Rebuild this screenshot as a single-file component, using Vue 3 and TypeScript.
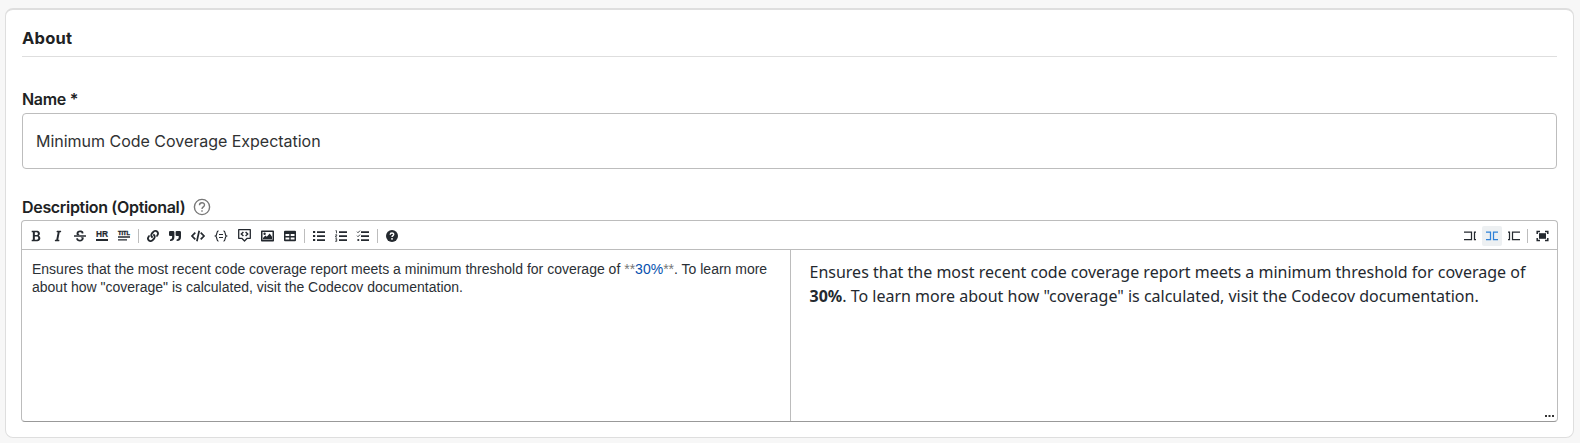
<script setup lang="ts">
import { ref } from 'vue'

interface Tool {
  name: string
  box: string
  size?: string
  body: string
}

const bold = '<path d="M304.793 243.891c33.639-18.537 53.657-54.16 53.657-95.693 0-48.236-26.25-87.626-68.626-104.179C265.138 34.01 240.849 32 209.661 32H24c-8.837 0-16 7.163-16 16v33.049c0 8.837 7.163 16 16 16h33.113v318.53H24c-8.837 0-16 7.163-16 16V464c0 8.837 7.163 16 16 16h195.69c24.203 0 44.834-1.289 66.866-7.584C337.52 457.193 376 410.647 376 350.014c0-52.168-26.573-91.684-71.207-106.123zM142.217 100.809h67.444c16.294 0 27.536 2.019 37.525 6.717 15.828 8.479 24.906 26.502 24.906 49.446 0 35.029-20.32 56.79-53.029 56.79h-76.846V100.809zm112.642 305.475c-10.14 4.056-22.677 4.907-31.409 4.907h-81.233V281.943h84.367c39.645 0 63.057 25.38 63.057 63.057.001 28.425-13.66 52.483-34.782 61.284z"/>'
const italic = '<path d="M204.758 416h-33.849l62.092-320h40.725a16 16 0 0 0 15.704-12.937l6.242-32C297.599 41.184 290.034 32 279.968 32H120.235a16 16 0 0 0-15.704 12.937l-6.242 32C96.362 86.816 103.927 96 113.993 96h33.846l-62.09 320H46.278a16 16 0 0 0-15.704 12.935l-6.245 32C22.402 470.815 29.967 480 40.034 480h158.479a16 16 0 0 0 15.704-12.935l6.245-32c1.927-9.88-5.638-19.065-15.704-19.065z"/>'
const strike = '<path d="M496 288H16c-8.837 0-16-7.163-16-16v-32c0-8.837 7.163-16 16-16h480c8.837 0 16 7.163 16 16v32c0 8.837-7.163 16-16 16zm-214.666 16c27.258 12.937 46.524 28.683 46.524 56.243 0 33.108-28.977 53.676-75.621 53.676-32.325 0-76.874-12.08-76.874-44.271V368c0-8.837-7.164-16-16-16H113.75c-8.836 0-16 7.163-16 16v19.204c0 66.845 77.717 101.82 154.487 101.82 88.578 0 162.013-45.438 162.013-134.424 0-19.815-3.618-36.417-10.143-50.6H281.334zm-30.952-96c-32.422-13.505-56.836-28.946-56.836-59.683 0-33.92 30.901-47.406 64.962-47.406 42.647 0 64.962 16.593 64.962 32.985V136c0 8.837 7.164 16 16 16h45.613c8.836 0 16-7.163 16-16v-30.318c0-52.438-71.725-79.875-142.575-79.875-85.203 0-150.726 40.972-150.726 125.646 0 22.71 4.665 41.176 12.777 56.547h129.823z"/>'
const chain = '<path d="M326.612 185.391c59.747 59.809 58.927 155.698.36 214.59-.11.12-.24.25-.36.37l-67.2 67.2c-59.27 59.27-155.699 59.262-214.96 0-59.27-59.26-59.27-155.7 0-214.96l37.106-37.106c9.84-9.84 26.786-3.3 27.294 10.606.648 17.722 3.826 35.527 9.69 52.721 1.986 5.822.567 12.262-3.783 16.612l-13.087 13.087c-28.026 28.026-28.905 73.66-1.155 101.96 28.024 28.579 74.086 28.749 102.325.51l67.2-67.19c28.191-28.191 28.073-73.757 0-101.83-3.701-3.694-7.429-6.564-10.341-8.569a16.037 16.037 0 0 1-6.947-12.606c-.396-10.567 3.348-21.456 11.698-29.806l21.054-21.055c5.521-5.521 14.182-6.199 20.584-1.731a152.482 152.482 0 0 1 20.522 17.197zM467.547 44.449c-59.261-59.262-155.69-59.27-214.96 0l-67.2 67.2c-.12.12-.25.25-.36.37-58.566 58.892-59.387 154.781.36 214.59a152.454 152.454 0 0 0 20.521 17.196c6.402 4.468 15.064 3.789 20.584-1.731l21.054-21.055c8.35-8.35 12.094-19.239 11.698-29.806a16.037 16.037 0 0 0-6.947-12.606c-2.912-2.005-6.64-4.875-10.341-8.569-28.073-28.073-28.191-73.639 0-101.83l67.2-67.19c28.239-28.239 74.3-28.069 102.325.51 27.75 28.3 26.872 73.934-1.155 101.96l-13.087 13.087c-4.35 4.35-5.769 10.79-3.783 16.612 5.864 17.194 9.042 34.999 9.69 52.721.509 13.906 17.454 20.446 27.294 10.606l37.106-37.106c59.271-59.259 59.271-155.699.001-214.959z"/>'
const lines = '<path d="M4 1.2h8v1.7H4zM4 5.2h8v1.7H4zM4 9.2h8v1.7H4z"/>'

const groups: Tool[][] = [
  [
    { name: 'Bold', box: '0 0 384 512', body: bold },
    { name: 'Italic', box: '0 0 320 512', body: italic },
    { name: 'Strikethrough', box: '0 0 512 512', body: strike },
    { name: 'Rule', box: '0 0 12 12', body: '<text x="0" y="7.2" font-size="9.500" font-weight="700" stroke="currentColor" stroke-width=".2" textLength="12" lengthAdjust="spacingAndGlyphs">HR</text><path d="M0 9h12v2H0z"/>' },
    { name: 'Title', box: '0 0 12 12', body: '<text x="0" y="5" font-size="6" font-weight="700" stroke="currentColor" stroke-width=".4" textLength="12" lengthAdjust="spacingAndGlyphs">TITL</text><path d="M0 6.2h12v1.5H0zM0 9.2h9v1.4H0z"/>' },
  ],
  [
    { name: 'Link', box: '0 0 512 512', body: chain },
    { name: 'Quote', box: '0 0 12 12', body: '<path d="M1.100 1h3A1.300 1.300 0 0 1 5.400 2.300V7a4 4 0 0 1-4 4H1V9.400h.3A2 2 0 0 0 3.100 7.300V6h-2A1.100 1.100 0 0 1 0 4.900V2.100A1.100 1.100 0 0 1 1.100 1zM7.700 1h3A1.300 1.300 0 0 1 12 2.300V7a4 4 0 0 1-4 4h-.4V9.400h.3A2 2 0 0 0 9.700 7.300V6h-2a1.100 1.100 0 0 1-1.100-1.100V2.100A1.100 1.100 0 0 1 7.700 1z"/>' },
    { name: 'Code', box: '0 0 14 12', size: 'wide', body: '<path d="M4.300 2.700 1 6l3.300 3.300M9.700 2.700 13 6 9.700 9.300M8.200.8 5.900 11.200" fill="none" stroke="currentColor" stroke-width="1.700"/>' },
    { name: 'Code block', box: '0 0 13 12', size: 'wide', body: '<path d="M4 .8C1.500.8 3.100 5.200 1 6c2.100.8.5 5.200 3 5.200M9 .8c2.500 0 .9 4.400 3 5.200-2.100.8-.5 5.200-3 5.200M4.500 4.500h4M4.500 7.500h4" fill="none" stroke="currentColor" stroke-width="1.150"/>' },
    { name: 'Comment', box: '0 0 13 13', size: 'comment', body: '<path d="M.7.7h11.600v8.600H9.200L6.500 12 3.800 9.300H.7z" fill="none" stroke="currentColor" stroke-width="1.300" stroke-linejoin="round"/><path d="M5.400 2.900 3.300 5l2.100 2.100M7.600 2.900 9.700 5 7.600 7.100" fill="none" stroke="currentColor" stroke-width="1.400"/>' },
    { name: 'Image', box: '0 0 13 12', size: 'image', body: '<path fill-rule="evenodd" d="M.8.5h11.400q.8 0 .8.8v9.400q0 .8-.8.8H.8q-.8 0-.8-.8V1.300Q0 .5.800.5zM1.500 2v7.800h10V2zM2 9.300V8l2.300-2.500 1.500 1.200L8.700 3.500 11 6.700v2.600zM2.400 3.700a1.200 1.200 0 1 0 2.400 0 1.200 1.200 0 1 0-2.400 0z"/>' },
    { name: 'Table', box: '0 0 12 12', body: '<path fill-rule="evenodd" d="M1 .8h10q1 0 1 1v8.400q0 1-1 1H1q-1 0-1-1V1.800q0-1 1-1zM1.500 4v2h3.800V4zM6.700 4v2h3.800V4zM1.500 7.500v2.100h3.800V7.500zM6.700 7.500v2.100h3.800V7.500z"/>' },
  ],
  [
    { name: 'List', box: '0 0 12 12', body: lines + '<path d="M0 1h2.200v2H0zM0 5h2.200v2H0zM0 9h2.200v2H0z"/>' },
    { name: 'Numbered list', box: '0 0 12 12', body: lines + '<path d="M.5.7h1v2.600M.4 4.700h1.300v1.200H.6v1.200h1.400M.4 8.600h1.300v2.800H.2M.5 10h1.200" fill="none" stroke="currentColor" stroke-width=".8"/>' },
    { name: 'Checked list', box: '0 0 12 12', body: lines + '<path d="M0 1.700l1 1L3 .6M0 5.700l1 1 2-2.100" fill="none" stroke="currentColor" stroke-width=".9"/><circle cx="1.300" cy="10" r="1.100"/>' },
  ],
  [
    { name: 'Help', box: '0 0 12 12', body: '<circle cx="6" cy="6" r="6"/><path d="M4.200 4.700C4.300 2.500 7.800 2.600 7.700 4.500 7.700 5.600 6 5.700 6 7.100M6 8.100v1.600" fill="none" stroke="#fff" stroke-width="1.450"/>' },
  ],
]

const views = ['edit', 'live', 'preview'] as const
const view = ref<(typeof views)[number]>('live')
const viewPaths: Record<(typeof views)[number], string> = {
  edit: 'M0 2h7.500v7.700H0M12 2h-1.500v7.700h1.500',
  live: 'M0 2h4.500v7.700H0M12 2H7.500v7.700h4.500',
  preview: 'M0 2h1.500v7.700H0M12 2H4.500v7.700h7.500',
}
const name = ref('Minimum Code Coverage Expectation')
</script>

<template>
  <main class="page">
    <section class="card">
      <h2>About</h2>
      <label class="label name-label" for="name">Name *</label>
      <input id="name" v-model="name" class="name" />
      <div class="label desc-label">
        <span>Description (Optional)</span>
        <svg class="hint" viewBox="0 0 18 18"><circle cx="9" cy="9" r="7.600" /><path d="M6.500 7.200C6.500 3.900 11.500 4 11.500 7 11.500 8.900 9 8.900 9 11M9 12.200v1.500" /></svg>
      </div>
      <div class="editor">
        <div class="toolbar">
          <div v-for="(group, i) in groups" :key="i" class="group">
            <button v-for="tool in group" :key="tool.name" :class="['tool', tool.size]" :aria-label="tool.name">
              <svg :viewBox="tool.box" v-html="tool.body" />
            </button>
          </div>
          <div class="views">
            <button v-for="mode in views" :key="mode" :class="['view', { active: view === mode }]" :aria-label="mode" @click="view = mode">
              <svg viewBox="0 0 12 12"><path :d="viewPaths[mode]" /></svg>
            </button>
            <i class="divider" />
            <button class="view full" aria-label="Fullscreen">
              <svg viewBox="0 0 12 12"><path d="M.7 4V1.500H3.500M8.500 1.500h2.800V4M11.300 8v2.500H8.500M3.500 10.500H.7V8" /><rect x="2.500" y="3.200" width="7" height="5.600" /></svg>
            </button>
          </div>
        </div>
        <div class="content">
          <div class="source">Ensures that the most recent code coverage report meets a minimum threshold for coverage of <span class="mark">**</span><span class="strong">30%</span><span class="mark">**</span>. To learn more<br />about how "coverage" is calculated, visit the Codecov documentation.</div>
          <div class="preview">Ensures that the most recent code coverage report meets a minimum threshold for coverage of<br /><b>30%</b>. To learn more about how "coverage" is calculated, visit the Codecov documentation.
            <svg class="grip" viewBox="0 0 9 2"><path d="M0 0h2v2H0zM3.500 0h2v2h-2zM7 0h2v2H7z" /></svg>
          </div>
        </div>
      </div>
    </section>
  </main>
</template>

<style>
body { margin: 0; background: #f7f7f7; }
</style>

<style scoped>
* { box-sizing: border-box; }
.page { height: 443px; padding: 8px 6px 0 5px; background: #f7f7f7; overflow: hidden; }
.card { height: 430px; padding: 0 16px; background: #fff; border: 1px solid #dedede; border-top-width: 2px; border-radius: 8px; display: flex; flex-direction: column; color: #242627; }
h2 { margin: 0; height: 47px; flex: none; border-bottom: 1px solid #dedede; font: 700 16.5px/24px Inter, sans-serif; letter-spacing: .25px; padding-top: 16px; color: #202223; }
.label { font: 600 16px/20px Inter, sans-serif; letter-spacing: -.32px; color: #202223; }
.name-label { margin-top: 32px; }
.name { margin-top: 4px; height: 56px; flex: none; width: 100%; border: 1px solid #bdbdbd; border-radius: 4px; padding: 0 13px; font: 400 16px/24px Inter, sans-serif; color: #303233; letter-spacing: -.02px; outline: 0; background: #fff; }
.desc-label { display: flex; align-items: center; gap: 8px; margin-top: 28px; height: 20px; }
.hint { width: 18px; height: 18px; fill: none; stroke: #777; stroke-width: 1.4; }
.editor { margin: 3px -1px 0; height: 202px; border: 1px solid #bcbcbc; border-bottom-color: #999; border-radius: 4px; overflow: hidden; }
.toolbar { height: 29px; border-bottom: 1px solid #bcbcbc; display: flex; align-items: center; padding: 1px 4px 0 3px; color: #24292f; }
.group { display: flex; align-items: center; }
.group + .group::before { content: ''; width: 1px; height: 14px; margin: 0 3px; background: #bdbdbd; }
button { border: 0; padding: 0; background: none; color: inherit; display: flex; align-items: center; justify-content: center; flex: none; }
.tool { width: 22px; height: 20px; }
.tool svg { width: 12px; height: 12px; fill: currentColor; font-family: "Liberation Sans", sans-serif; overflow: visible; }
.tool.wide { width: 23px; }
.tool.wide svg { width: 14px; }
.tool.comment { width: 24px; }
.tool.comment svg { width: 13px; height: 13px; }
.tool.image { width: 23px; }
.tool.image svg { width: 13px; }
.views { display: flex; align-items: center; margin-left: auto; }
.view { width: 20px; height: 20px; margin: 0 1px; border-radius: 2px; color: #24292f; }
.view svg { width: 12px; height: 12px; fill: none; stroke: currentColor; stroke-width: 1.25; }
.view.active { background: #edf0f2; color: #2f81d8; }
.full rect { fill: currentColor; stroke: none; }
.full svg { width: 13px; stroke-width: 1.5; }
.divider { width: 1px; height: 14px; margin: 0 3px 0 2px; background: #bdbdbd; }
.content { height: 171px; display: flex; }
.source { width: 769px; border-right: 1px solid #bcbcbc; padding: 10px; font: 14px/18px "Liberation Sans", sans-serif; color: #2b3035; white-space: nowrap; }
.mark { color: #777; }
.strong { color: #0550ae; }
.preview { position: relative; flex: 1; padding: 10px 18.5px; font: 16px/24px "Noto Sans", sans-serif; color: #24292f; white-space: nowrap; }
.grip { position: absolute; right: 3px; bottom: 4px; width: 9px; height: 2px; fill: #333; }
</style>
